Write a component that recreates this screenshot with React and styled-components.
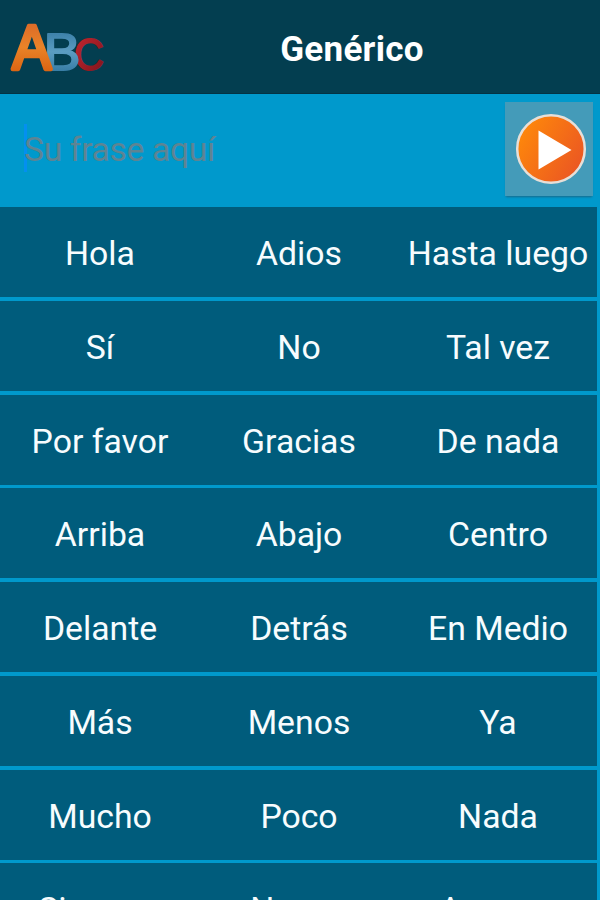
import styled, { createGlobalStyle } from 'styled-components'

const GlobalStyle = createGlobalStyle`
   * {
      box-sizing: border-box;
   }
   body {
      margin: 0;
      overflow: hidden;
      background: #0099cc;
      font-family: Roboto, 'Liberation Sans', sans-serif;
   }
`

const Screen = styled.div`
   display: flex;
   flex-direction: column;
   width: 600px;
   height: 900px;
   overflow: hidden;
   background: #0099cc;
`

const TitleBar = styled.header`
   display: flex;
   flex: none;
   align-items: center;
   height: 94px;
   background: #033e50;
   border-bottom: 1px solid #033344;
`

const Logo = styled.svg`
   flex: none;
   width: 110px;
   height: 93px;
   stroke-linejoin: round;
   font-family: 'Liberation Sans', sans-serif;
`

const Title = styled.h1`
   flex: 1;
   margin: 0;
   padding: 6px 6px 0 0;
   color: #fff;
   font-size: 35px;
   font-weight: 700;
   line-height: 40px;
   text-align: center;
   letter-spacing: 0.3px;
`

const PhraseBar = styled.div`
   display: flex;
   flex: none;
   align-items: flex-start;
   justify-content: space-between;
   height: 113px;
   padding: 8px 7px 0 24px;
`

const PhraseField = styled.div`
   height: 48px;
   margin-top: 22px;
   border-left: 3px solid #0390f0;
   color: #5e8493;
   font-size: 33.75px;
   line-height: 52px;
   letter-spacing: -0.4px;
   white-space: nowrap;

   span {
      margin-left: -3px;
   }
`

const PlayButton = styled.button`
   display: flex;
   align-items: center;
   justify-content: center;
   width: 88px;
   height: 94px;
   padding: 0 0 0 3px;
   border: 0;
   background: #449bb9;
   box-shadow: 0 2px 2px -1px #17698a;
`

const Grid = styled.main`
   display: flex;
   flex: none;
   flex-direction: column;
   gap: 3.75px;
   width: 597px;
`

const Row = styled.div`
   display: grid;
   grid-template-columns: repeat(3, 1fr);
   height: 90px;
   background: #005c7c;
`

const Word = styled.div`
   display: flex;
   align-items: center;
   justify-content: center;
   padding: 3px 0 0 1px;
   color: #f7fcfe;
   font-size: 33.75px;
   white-space: nowrap;
`

const rows = [
   ['Hola', 'Adios', 'Hasta luego'],
   ['Sí', 'No', 'Tal vez'],
   ['Por favor', 'Gracias', 'De nada'],
   ['Arriba', 'Abajo', 'Centro'],
   ['Delante', 'Detrás', 'En Medio'],
   ['Más', 'Menos', 'Ya'],
   ['Mucho', 'Poco', 'Nada'],
   ['Siempre', 'Nunca', 'A veces'],
]

function AbcLogo() {
   return (
      <Logo viewBox="0 0 110 93">
         <defs>
            <linearGradient id="orange" x1="0" y1="0" x2="0" y2="1">
               <stop offset="0.15" stopColor="#dc6a28" />
               <stop offset="0.5" stopColor="#e98328" />
               <stop offset="0.9" stopColor="#d9600f" />
            </linearGradient>
            <linearGradient id="blue" x1="0" y1="0" x2="0" y2="1">
               <stop offset="0.2" stopColor="#3f83ab" />
               <stop offset="0.5" stopColor="#5b9dc2" />
               <stop offset="0.9" stopColor="#3177a0" />
            </linearGradient>
            <linearGradient id="red" x1="0" y1="0" x2="1" y2="1">
               <stop offset="0.2" stopColor="#b8242d" />
               <stop offset="0.9" stopColor="#83151d" />
            </linearGradient>
         </defs>
         <text x="74" y="69.5" fontSize="44" textLength="30" lengthAdjust="spacingAndGlyphs" fill="url(#red)" stroke="url(#red)" strokeWidth="1.8">
            C
         </text>
         <text x="43.5" y="69.8" fontSize="52" textLength="37" lengthAdjust="spacingAndGlyphs" fill="url(#blue)" stroke="url(#blue)" strokeWidth="1.8">
            B
         </text>
         <text x="12.5" y="69" fontSize="63" textLength="38.5" lengthAdjust="spacingAndGlyphs" fill="url(#orange)" stroke="url(#orange)" strokeWidth="4.5">
            A
         </text>
      </Logo>
   )
}

function PlayIcon() {
   return (
      <svg width="72" height="72" viewBox="0 0 72 72">
         <defs>
            <linearGradient id="play" x1="0" y1="0.2" x2="1" y2="0.8">
               <stop offset="0" stopColor="#ff8a09" />
               <stop offset="1" stopColor="#ea5424" />
            </linearGradient>
         </defs>
         <circle cx="36" cy="36" r="33.8" fill="url(#play)" stroke="#e6dfd8" strokeWidth="2.5" />
         <path d="M23.5 17.5v39L56.5 37z" fill="#fff" />
      </svg>
   )
}

function App() {
   return (
      <Screen>
         <GlobalStyle />
         <TitleBar>
            <AbcLogo />
            <Title>Genérico</Title>
         </TitleBar>
         <PhraseBar>
            <PhraseField>
               <span>Su frase aquí</span>
            </PhraseField>
            <PlayButton aria-label="Reproducir">
               <PlayIcon />
            </PlayButton>
         </PhraseBar>
         <Grid>
            {rows.map((row) => (
               <Row key={row[0]}>
                  {row.map((word) => (
                     <Word key={word}>{word}</Word>
                  ))}
               </Row>
            ))}
         </Grid>
      </Screen>
   )
}

export default App
